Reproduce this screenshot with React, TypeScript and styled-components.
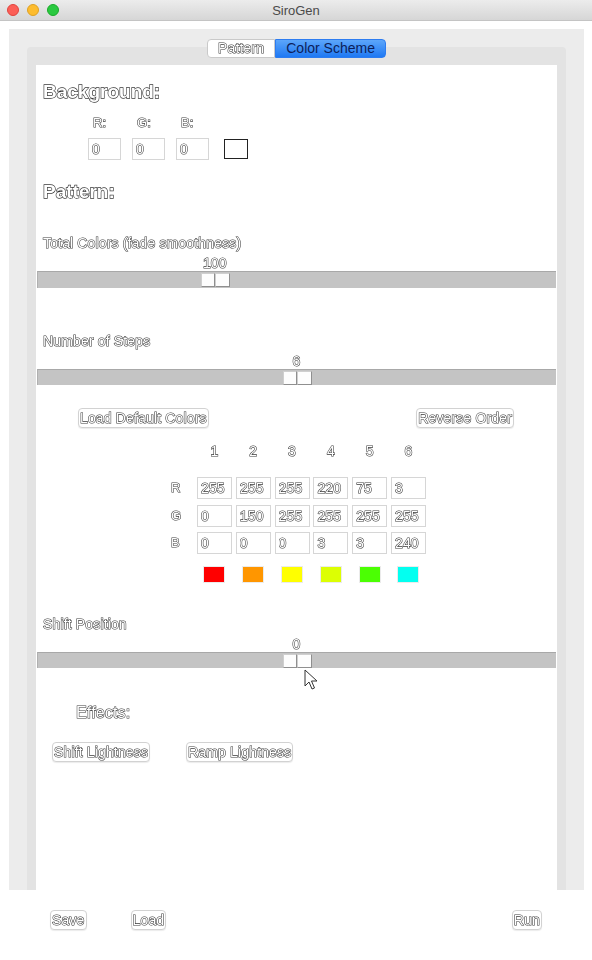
import React from "react";
import styled, { createGlobalStyle, css } from "styled-components";

const GlobalStyle = createGlobalStyle`
  html, body { margin: 0; padding: 0; background: #fff; }
  body { font-family: "Liberation Sans", Arial, sans-serif; }
  * { box-sizing: border-box; }
`;

const hollow = css`
  color: #fff;
  -webkit-text-stroke: 1.1px #383838;
  paint-order: stroke fill;
  letter-spacing: 0.15px;
  filter: grayscale(1);
`;

const Window = styled.div`
  position: relative;
  width: 592px;
  height: 960px;
  background: #fff;
  display: flex;
  flex-direction: column;
  overflow: hidden;
`;

const TitleBar = styled.div`
  flex: none;
  height: 21px;
  background: linear-gradient(#ececec, #d6d6d6);
  border-bottom: 1px solid #c4c4c4;
  display: grid;
  grid-template-columns: 1fr auto 1fr;
  align-items: center;
`;

const Lights = styled.div`
  display: flex;
  gap: 8px;
  padding-left: 7px;
`;

const Light = styled.span<{ $c: string; $b: string }>`
  width: 12px;
  height: 12px;
  border-radius: 50%;
  background: ${(p) => p.$c};
  border: 0.5px solid ${(p) => p.$b};
`;

const Title = styled.div`
  font-size: 13px;
  color: #4a4a4a;
`;

const OuterPanel = styled.div`
  flex: none;
  margin: 8px 8px 0 9px;
  height: 861px;
  background: #ececec;
  padding: 18px 18px 0 18px;
`;

const TabPane = styled.div`
  height: 100%;
  background: #e3e3e3;
  border-radius: 4px 4px 0 0;
  padding: 0 9px;
  display: flex;
  flex-direction: column;
`;

const TabRow = styled.div`
  margin-top: -8px;
  display: flex;
  justify-content: center;
  flex: none;
`;

const Tab = styled.div<{ $active?: boolean; $pos: "left" | "right" }>`
  font-size: 14px;
  line-height: 17px;
  padding: 0 10px;
  border: 1px solid ${(p) => (p.$active ? "#2d7cf0" : "#c9c9c9")};
  border-radius: ${(p) => (p.$pos === "left" ? "4px 0 0 4px" : "0 4px 4px 0")};
  ${(p) =>
    p.$active
      ? css`
          background: linear-gradient(#5ca6fb, #1f79f3);
          color: #0d1f5a;
        `
      : css`
          background: #fff;
          ${hollow};
        `}
`;

const Content = styled.div`
  flex: 1;
  margin-top: 7px;
  background: #fff;
  display: flex;
  flex-direction: column;
  padding: 0 1px;
`;

const Heading = styled.div<{ $mt: number }>`
  margin-top: ${(p) => p.$mt}px;
  padding-left: 6px;
  font-size: 19px;
  font-weight: bold;
  line-height: 22px;
  ${hollow};
  -webkit-text-stroke-width: 1.3px;
  letter-spacing: 0;
`;

const Label = styled.div<{ $mt: number; $pl?: number; $size?: number }>`
  margin-top: ${(p) => p.$mt}px;
  padding-left: ${(p) => p.$pl ?? 6}px;
  font-size: ${(p) => p.$size ?? 14}px;
  line-height: 16px;
  ${hollow};
`;

const BgGrid = styled.div<{ $mt: number }>`
  margin-top: ${(p) => p.$mt}px;
  margin-left: 51px;
  display: grid;
  grid-template-columns: 33px 33px 33px 24px;
  column-gap: 11px;
  align-items: center;
`;

const BgLabel = styled.div`
  font-size: 13px;
  line-height: 16px;
  padding-left: 5px;
  ${hollow};
`;

const Field = styled.input<{ $w?: number }>`
  width: ${(p) => p.$w ?? 33}px;
  height: 22px;
  border: 1px solid #d6d6d6;
  border-radius: 0;
  background: #fff;
  padding: 0 0 0 3px;
  margin: 0;
  font-family: "Liberation Sans", Arial, sans-serif;
  font-size: 14px;
  outline: none;
  ${hollow};
`;

const PreviewBox = styled.div`
  margin-left: 4px;
  width: 24px;
  height: 20px;
  border: 1px solid #222;
  background: #fff;
`;

const ValueRow = styled.div`
  margin-top: 3px;
  height: 14px;
  position: relative;
`;

const ValueText = styled.span`
  display: inline-block;
  transform: translateX(-50%);
  font-size: 14px;
  line-height: 14px;
  ${hollow};
`;

const Track = styled.div<{ $h: number }>`
  margin-top: 3px;
  position: relative;
  height: ${(p) => p.$h}px;
  background: #c4c4c4;
  border-top: 1px solid #a8a8a8;
  border-left: 1px solid #b0b0b0;
`;

const Thumb = styled.div`
  position: absolute;
  top: 1px;
  width: 29px;
  height: 14px;
  display: flex;
`;

const ThumbHalf = styled.div`
  width: 14.5px;
  height: 14px;
  background: #fdfdfd;
  border: 1px solid #cfcfcf;
  border-right-color: #8f8f8f;
  border-bottom-color: #8f8f8f;
`;

const ButtonRow = styled.div<{ $mt: number; $pl: number; $pr?: number; $between?: boolean; $gap?: number }>`
  margin-top: ${(p) => p.$mt}px;
  padding: 0 ${(p) => p.$pr ?? 0}px 0 ${(p) => p.$pl}px;
  display: flex;
  justify-content: ${(p) => (p.$between ? "space-between" : "flex-start")};
  gap: ${(p) => p.$gap ?? 0}px;
`;

const Button = styled.div`
  height: 20px;
  line-height: 18px;
  padding: 0 1px;
  font-size: 14px;
  background: #fff;
  border: 1px solid #d2d2d2;
  border-radius: 4px;
  box-shadow: 0 1px 1px rgba(0, 0, 0, 0.08);
  white-space: nowrap;
  ${hollow};
`;

const ColorGrid = styled.div<{ $mt: number; $rh: number }>`
  margin-top: ${(p) => p.$mt}px;
  margin-left: 134px;
  display: grid;
  grid-template-columns: 22.2px repeat(6, 35px);
  column-gap: 3.8px;
  height: ${(p) => p.$rh}px;
  align-items: center;
`;

const HeaderCell = styled.div`
  text-align: center;
  font-size: 14px;
  line-height: 16px;
  ${hollow};
`;

const RowLabel = styled.div`
  font-size: 13px;
  line-height: 16px;
  ${hollow};
`;

const Swatch = styled.div`
  justify-self: center;
  width: 20px;
  height: 15px;
  outline: 1px solid #ebebeb;
`;

const BottomBar = styled.div`
  flex: none;
  display: flex;
  justify-content: space-between;
  padding: 20px 50px 0 50px;
`;

const LeftGroup = styled.div`
  display: flex;
  gap: 44px;
`;

const Cursor = styled.svg`
  position: absolute;
  left: 304px;
  top: 669px;
`;

type SliderProps = { value: number; min: number; max: number; h: number };

function Slider({ value, min, max, h }: SliderProps) {
  const f = (value - min) / (max - min);
  const left = `calc(${f} * (100% - 29px))`;
  return (
    <>
      <ValueRow>
        <span style={{ position: "absolute", left: `calc(${f} * (100% - 29px) + 14.5px)` }}>
          <ValueText>{value}</ValueText>
        </span>
      </ValueRow>
      <Track $h={h}>
        <Thumb style={{ left }}>
          <ThumbHalf />
          <ThumbHalf />
        </Thumb>
      </Track>
    </>
  );
}

const colors = [
  [255, 0, 0],
  [255, 150, 0],
  [255, 255, 0],
  [220, 255, 3],
  [75, 255, 3],
  [3, 255, 240],
];

export default function App() {
  return (
    <>
      <GlobalStyle />
      <Window>
        <TitleBar>
          <Lights>
            <Light $c="#fc5f57" $b="#e0443e" />
            <Light $c="#fdbc2e" $b="#dea123" />
            <Light $c="#2ac940" $b="#1aab29" />
          </Lights>
          <Title>SiroGen</Title>
          <div />
        </TitleBar>
        <OuterPanel>
          <TabPane>
            <TabRow>
              <Tab $pos="left">Pattern</Tab>
              <Tab $pos="right" $active>
                Color Scheme
              </Tab>
            </TabRow>
            <Content>
              <Heading $mt={16}>Background:</Heading>
              <BgGrid $mt={12}>
                <BgLabel>R:</BgLabel>
                <BgLabel>G:</BgLabel>
                <BgLabel>B:</BgLabel>
                <div />
              </BgGrid>
              <BgGrid $mt={7}>
                <Field readOnly value="0" />
                <Field readOnly value="0" />
                <Field readOnly value="0" />
                <PreviewBox />
              </BgGrid>
              <Heading $mt={21}>Pattern:</Heading>
              <Label $mt={32}>Total Colors (fade smoothness)</Label>
              <Slider value={100} min={2} max={296} h={17} />
              <Label $mt={45}>Number of Steps</Label>
              <Slider value={6} min={2} max={10} h={16} />
              <ButtonRow $mt={23} $pl={41} $pr={42} $between>
                <Button>Load Default Colors</Button>
                <Button>Reverse Order</Button>
              </ButtonRow>
              <ColorGrid $mt={15} $rh={16}>
                <div />
                {colors.map((_, i) => (
                  <HeaderCell key={i}>{i + 1}</HeaderCell>
                ))}
              </ColorGrid>
              {["R", "G", "B"].map((ch, ci) => (
                <ColorGrid key={ch} $mt={ci === 0 ? 18 : 5.5} $rh={22}>
                  <RowLabel>{ch}</RowLabel>
                  {colors.map((c, i) => (
                    <Field key={i} $w={35} readOnly value={String(c[ci])} />
                  ))}
                </ColorGrid>
              ))}
              <ColorGrid $mt={13} $rh={15}>
                <div />
                {colors.map((c, i) => (
                  <Swatch key={i} style={{ background: `rgb(${c[0]},${c[1]},${c[2]})` }} />
                ))}
              </ColorGrid>
              <Label $mt={34}>Shift Position</Label>
              <Slider value={0} min={-5} max={5} h={16} />
              <Label $mt={37} $pl={39} $size={16}>
                Effects:
              </Label>
              <ButtonRow $mt={21} $pl={15} $gap={36}>
                <Button>Shift Lightness</Button>
                <Button>Ramp Lightness</Button>
              </ButtonRow>
            </Content>
          </TabPane>
        </OuterPanel>
        <BottomBar>
          <LeftGroup>
            <Button>Save</Button>
            <Button>Load</Button>
          </LeftGroup>
          <Button>Run</Button>
        </BottomBar>
        <Cursor width="14" height="22" viewBox="0 0 14 22">
          <path d="M1 1 L1 17 L5 13 L8 20 L10.5 19 L7.5 12 L13 12 Z" fill="#fff" stroke="#333" strokeWidth="1" strokeLinejoin="round" />
        </Cursor>
      </Window>
    </>
  );
}
